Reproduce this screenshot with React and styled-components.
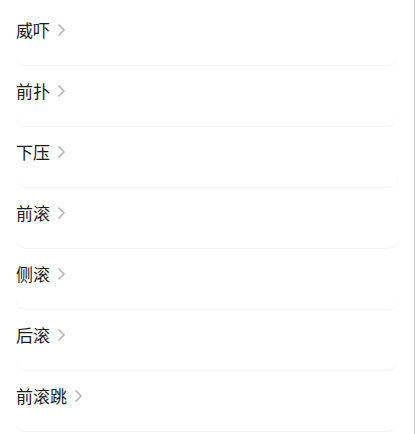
import styled, { createGlobalStyle } from "styled-components";

const GlobalStyle = createGlobalStyle`
  html, body {
    margin: 0;
    padding: 0;
    background: #ffffff;
  }
`;

const Page = styled.div`
  box-sizing: border-box;
  width: 415px;
  height: 434px;
  overflow: hidden;
  border-right: 1px solid #cfcfcf;
  padding: 5px 16px 0 16px;
  display: flex;
  flex-direction: column;
  gap: 1px;
  font-family: "Noto Sans CJK SC", "Noto Sans", sans-serif;
`;

const Card = styled.div`
  height: 60px;
  box-sizing: border-box;
  padding-top: 13px;
  background: #fff;
  border-radius: 10px;
  box-shadow: 0 1px 1px rgba(0, 0, 0, 0.05);
  display: flex;
  align-items: flex-start;
`;

const Title = styled.div`
  display: flex;
  align-items: center;
  gap: 7px;
  font-size: 17px;
  line-height: 24px;
  color: #1a1a1a;
`;

const Chevron = () => (
  <svg width="9" height="14" viewBox="0 0 9 14">
    <polyline
      points="1.5,1.5 7,7 1.5,12.5"
      fill="none"
      stroke="#b5b5b5"
      strokeWidth="1.6"
    />
  </svg>
);

const items = ["威吓", "前扑", "下压", "前滚", "侧滚", "后滚", "前滚跳"];

const App = () => {
  return (
    <>
      <GlobalStyle />
      <Page>
        {items.map((name) => (
          <Card key={name}>
            <Title>
              {name}
              <Chevron />
            </Title>
          </Card>
        ))}
      </Page>
    </>
  );
};

export default App;
